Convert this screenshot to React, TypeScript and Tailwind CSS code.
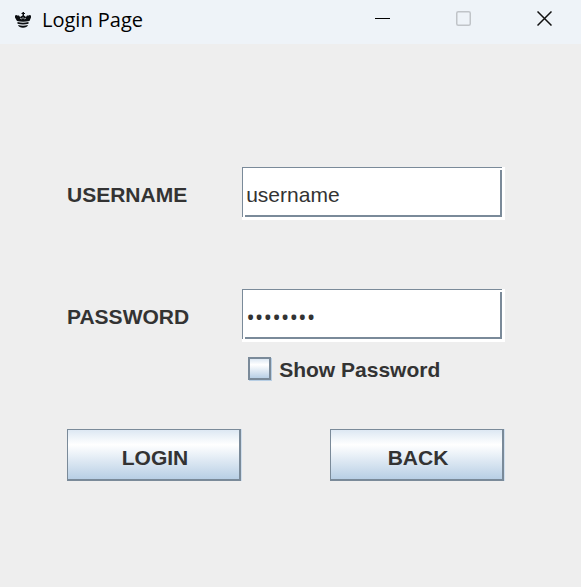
import { useState } from "react";
import type { InputHTMLAttributes } from "react";

function CrownIcon() {
  return (
    <svg width="18" height="18" viewBox="0 0 18 18" aria-hidden="true" fill="#0b0d10">
      <path d="M8.500 1h1.500v1h1v1h-1v1.500l2 1.500 1-1.500h2V4l2 .5v2L15.500 10q-6.500 1.500-12.500 0L1 6.500v-2L3 4v.5h2L6 6l2.500-1.500V3h-1V2h1z" />
      <path d="M3.500 11q5.500 1.500 11 0v1.800q-5.500 1.600-11 0z" />
      <path d="M4 14q5 1.600 10 0-1 2.800-5 2.800T4 14z" />
      <path d="M6 7l1.500 1L9 6.500 10.500 8 12 7" fill="none" stroke="#eef3f8" strokeWidth=".7" />
    </svg>
  );
}

function TitleBar() {
  return (
    <header className="flex h-11 items-start justify-between bg-[#eef3f8] pl-[14px] text-black">
      <div className="flex h-10 items-center gap-[10px]">
        <CrownIcon />
        <h1 className="font-['Open_Sans','Noto_Sans',sans-serif] text-[20px] leading-6">Login Page</h1>
      </div>
      <div className="flex">
        <button type="button" aria-label="Minimize" className="flex h-[37px] w-[81px] items-center justify-center">
          <svg width="15" height="15" viewBox="0 0 15 15"><path d="M0 7.500h15" stroke="#000" /></svg>
        </button>
        <button type="button" aria-label="Maximize" disabled className="flex h-[37px] w-[81px] items-center justify-center">
          <svg width="15" height="15" viewBox="0 0 15 15"><rect x=".75" y=".75" width="13.500" height="13.500" rx="1.500" fill="none" stroke="#c0c4c8" strokeWidth="1.500" /></svg>
        </button>
        <button type="button" aria-label="Close" className="flex h-[37px] w-[77px] items-center justify-center pl-1">
          <svg width="15" height="15" viewBox="0 0 15 15"><path d="M.5.5l14 14M14.500.5l-14 14" stroke="#111" strokeWidth="1.500" /></svg>
        </button>
      </div>
    </header>
  );
}

type FieldProps = InputHTMLAttributes<HTMLInputElement> & { label: string; textClass: string };

function Field({ label, textClass, id, ...rest }: FieldProps) {
  return (
    <div className="grid grid-cols-[2fr_3fr] items-center">
      <label htmlFor={id} className="pt-[3px] font-bold">{label}</label>
      <div className="bg-white pr-[3px] pb-[3px]">
        <div className="border-t border-l border-[#7a8a99] pt-[2px] pl-[2px]">
          <input
            id={id}
            className={"block h-[47px] w-full border-r-2 border-b-2 border-[#7a8a99] bg-white pt-[5px] pl-px outline-none " + textClass}
            {...rest}
          />
        </div>
      </div>
    </div>
  );
}

const metal = "bg-linear-to-b from-[#dde8f3] via-white via-30% to-[#b8cfe5] border-[#7a8a99]";

function MetalButton({ children }: { children: string }) {
  return (
    <button type="button" className={"h-[52px] border-t border-r-2 border-b-2 border-l pt-[6px] pl-[3px] font-bold shadow-[1px_0_0_#cfdeed] " + metal}>
      {children}
    </button>
  );
}

export default function App() {
  const [shown, setShown] = useState(false);
  return (
    <div className="min-h-screen bg-[#eeeeee] font-['Liberation_Sans',Arial,sans-serif] text-[21px] leading-6 text-[#333333]">
      <TitleBar />
      <form className="pt-[123px] pr-[76px] pl-[67px]">
        <div className="flex flex-col gap-[69px]">
          <Field id="username" label="USERNAME" defaultValue="username" textClass="text-[21px]" />
          <Field
            id="password"
            label="PASSWORD"
            type={shown ? "text" : "password"}
            defaultValue="password"
            textClass={shown ? "text-[21px]" : "font-['Open_Sans',sans-serif] text-[23px]"}
          />
        </div>
        <div className="mt-[15px] grid grid-cols-[2fr_3fr]">
          <label className="col-start-2 flex items-start gap-2 pl-[6px] font-bold">
            <input
              type="checkbox"
              checked={shown}
              onChange={(e) => setShown(e.target.checked)}
              className={"size-[23px] appearance-none border-2 shadow-[1px_1px_0_#b8cfe5] checked:bg-[#7a8a99] " + metal}
            />
            <span className="pt-px">Show Password</span>
          </label>
        </div>
        <div className="mt-[47px] grid grid-cols-2 gap-[89px] pr-px">
          <MetalButton>LOGIN</MetalButton>
          <MetalButton>BACK</MetalButton>
        </div>
      </form>
    </div>
  );
}
